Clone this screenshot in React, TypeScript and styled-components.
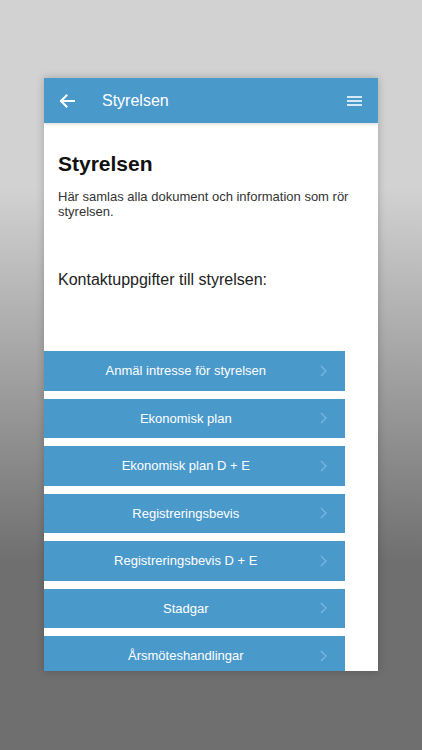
import React from 'react';
import styled, { createGlobalStyle } from 'styled-components';

const GlobalStyle = createGlobalStyle`
  * {
    box-sizing: border-box;
  }

  body {
    margin: 0;
    font-family: 'Liberation Sans', Arial, sans-serif;
  }
`;

const links = [
  'Anmäl intresse för styrelsen',
  'Ekonomisk plan',
  'Ekonomisk plan D + E',
  'Registreringsbevis',
  'Registreringsbevis D + E',
  'Stadgar',
  'Årsmöteshandlingar',
];

function BackIcon() {
  return (
    <svg width='16' height='14' viewBox='0 0 16 14' fill='none'>
      <path d='M15 7H2M7.5 1.5 2 7l5.5 5.5' stroke='#fff' strokeWidth='2' strokeLinecap='square' />
    </svg>
  );
}

function MenuIcon() {
  return (
    <svg width='15' height='10' viewBox='0 0 15 10' fill='none'>
      <path d='M0 1h15M0 5h15M0 9h15' stroke='#d6e9f6' strokeWidth='1.8' />
    </svg>
  );
}

function Chevron() {
  return (
    <svg width='7' height='12' viewBox='0 0 7 12' fill='none'>
      <path d='M1 1l5 5-5 5' stroke='#7ab8e2' strokeWidth='1.2' />
    </svg>
  );
}

function App() {
  return (
    <Page>
      <GlobalStyle />
      <Phone>
        <Header>
          <IconButton type='button' aria-label='Tillbaka'>
            <BackIcon />
          </IconButton>
          <HeaderTitle>Styrelsen</HeaderTitle>
          <MenuButton type='button' aria-label='Meny'>
            <MenuIcon />
          </MenuButton>
        </Header>
        <Content>
          <Title>Styrelsen</Title>
          <Intro>Här samlas alla dokument och information som rör styrelsen.</Intro>
          <SubTitle>Kontaktuppgifter till styrelsen:</SubTitle>
        </Content>
        <LinkList>
          {links.map((label) => (
            <LinkButton key={label} type='button'>
              <span>{label}</span>
              <ChevronWrap>
                <Chevron />
              </ChevronWrap>
            </LinkButton>
          ))}
        </LinkList>
      </Phone>
    </Page>
  );
}

export default App;

const Page = styled.div`
  display: flex;
  justify-content: center;
  min-height: 750px;
  padding-top: 78px;
  background: linear-gradient(to bottom, #d2d2d2 0%, #d2d2d2 25%, #6f6f6f 75%, #6f6f6f 100%);
`;

const Phone = styled.div`
  width: 334px;
  height: 593px;
  overflow: hidden;
  background: #fff;
  box-shadow: 0 0 8px rgb(0 0 0 / 22%);
`;

const Header = styled.header`
  position: relative;
  display: flex;
  align-items: center;
  height: 45px;
  padding: 0 15px 0 15px;
  background: #4a99cb;
  box-shadow: 0 1px 3px rgb(0 0 0 / 18%);
`;

const IconButton = styled.button`
  display: flex;
  align-items: center;
  padding: 0;
  border: 0;
  background: none;
`;

const MenuButton = styled(IconButton)`
  margin-left: auto;
  margin-right: 1px;
`;

const HeaderTitle = styled.h1`
  margin: 0 0 0 27px;
  font-size: 16px;
  font-weight: 400;
  color: #fff;
`;

const Content = styled.div`
  padding: 29px 14px 0;
`;

const Title = styled.h2`
  margin: 0;
  font-size: 21px;
  line-height: 24px;
  font-weight: 700;
  color: #111;
`;

const Intro = styled.p`
  margin: 13px 0 0;
  font-size: 13px;
  color: #333;
`;

const SubTitle = styled.h3`
  margin: 52px 0 0;
  font-size: 16px;
  font-weight: 400;
  color: #222;
`;

const LinkList = styled.div`
  display: flex;
  flex-direction: column;
  gap: 8px;
  width: 90%;
  margin-top: 62px;
`;

const LinkButton = styled.button`
  position: relative;
  display: flex;
  flex-shrink: 0;
  align-items: center;
  justify-content: center;
  height: 39.5px;
  padding: 0 17px 0 0;
  border: 0;
  background: #4a99cb;
  font-family: 'Liberation Sans', Arial, sans-serif;
  font-size: 13px;
  color: #fff;
`;

const ChevronWrap = styled.span`
  position: absolute;
  top: 50%;
  right: 18px;
  display: flex;
  transform: translateY(-50%);
`;
